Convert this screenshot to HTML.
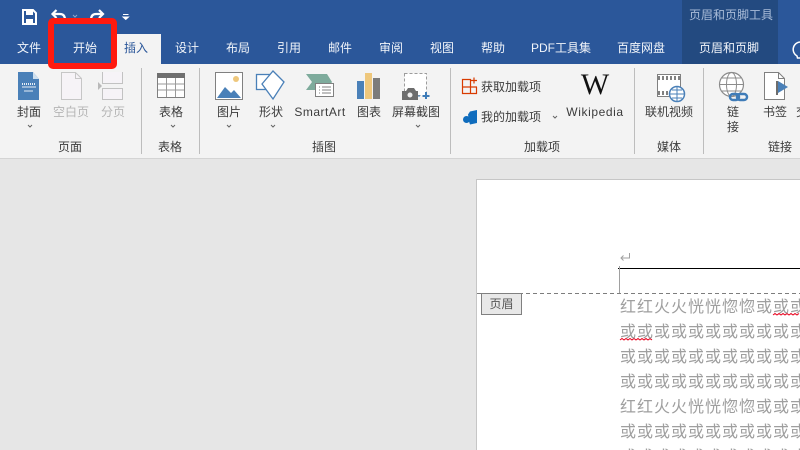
<!DOCTYPE html>
<html><head><meta charset="utf-8">
<style>
html,body{margin:0;padding:0;width:800px;height:450px;overflow:hidden;background:#e6e6e6}
body{position:relative;font-family:"Liberation Sans","Noto Sans CJK SC",sans-serif}
.t{position:absolute;white-space:nowrap;transform:translate(-50%,-50%);font-size:12px;line-height:14px;color:#3c3c3c}
.tab{color:#f2f5fa}
.g{color:#b5b5b5}
.sep{position:absolute;top:68px;height:86px;width:1px;background:#bdbdbd}
.doc{position:absolute;left:620px;top:295px;width:180px;height:155px;overflow:hidden}
.l{position:absolute;left:0;white-space:nowrap;font-size:16px;line-height:20px;letter-spacing:1px;color:#9f9f9f;font-family:"Noto Sans CJK SC",sans-serif}
svg{position:absolute;left:0;top:0}
</style></head>
<body>
<div style="position:absolute;left:0;top:0;width:800px;height:64px;background:#2b579a"></div>
<div style="position:absolute;left:682px;top:0;width:96px;height:64px;background:#234a80"></div>
<div style="position:absolute;left:116px;top:34px;width:45px;height:30px;background:#f3f3f3"></div>
<div style="position:absolute;left:0;top:64px;width:800px;height:94px;background:#f3f3f3"></div>
<div style="position:absolute;left:0;top:158px;width:800px;height:1px;background:#d4d4d4"></div>

<div class="t tab" style="left:29px;top:48px">文件</div>
<div class="t tab" style="left:85px;top:48px">开始</div>
<div class="t" style="left:136px;top:48px;color:#2b579a">插入</div>
<div class="t tab" style="left:187px;top:48px">设计</div>
<div class="t tab" style="left:238px;top:48px">布局</div>
<div class="t tab" style="left:289px;top:48px">引用</div>
<div class="t tab" style="left:340px;top:48px">邮件</div>
<div class="t tab" style="left:391px;top:48px">审阅</div>
<div class="t tab" style="left:442px;top:48px">视图</div>
<div class="t tab" style="left:493px;top:48px">帮助</div>
<div class="t tab" style="left:561px;top:48px">PDF工具集</div>
<div class="t tab" style="left:641px;top:48px">百度网盘</div>
<div class="t tab" style="left:729px;top:48px">页眉和页脚</div>
<div class="t" style="left:731px;top:15px;color:#a9bcd8">页眉和页脚工具</div>

<div class="sep" style="left:141px"></div>
<div class="sep" style="left:199px"></div>
<div class="sep" style="left:450px"></div>
<div class="sep" style="left:634px"></div>
<div class="sep" style="left:703px"></div>

<div class="t" style="left:29px;top:112px">封面</div>
<div class="t g" style="left:71px;top:112px">空白页</div>
<div class="t g" style="left:113px;top:112px">分页</div>
<div class="t" style="left:171px;top:112px">表格</div>
<div class="t" style="left:229px;top:112px">图片</div>
<div class="t" style="left:271px;top:112px">形状</div>
<div class="t" style="left:320px;top:112px;letter-spacing:.5px">SmartArt</div>
<div class="t" style="left:369px;top:112px">图表</div>
<div class="t" style="left:416px;top:112px">屏幕截图</div>
<div class="t" style="left:511px;top:87px">获取加载项</div>
<div class="t" style="left:511px;top:117px">我的加载项</div>
<div class="t" style="left:595px;top:112px;letter-spacing:.6px">Wikipedia</div>
<div class="t" style="left:669px;top:112px">联机视频</div>
<div class="t" style="left:733px;top:112px">链</div>
<div class="t" style="left:733px;top:127px">接</div>
<div class="t" style="left:775px;top:112px">书签</div>
<div style="position:absolute;left:796px;top:105px;width:4px;height:14px;overflow:hidden;font-size:12px;line-height:14px;color:#3c3c3c">交</div>

<div class="t" style="left:70px;top:147px">页面</div>
<div class="t" style="left:170px;top:147px">表格</div>
<div class="t" style="left:324px;top:147px">插图</div>
<div class="t" style="left:542px;top:147px">加载项</div>
<div class="t" style="left:669px;top:147px">媒体</div>
<div class="t" style="left:780px;top:147px">链接</div>

<div class="t" style="left:595px;top:85px;font-family:'Liberation Serif',serif;font-size:30px;line-height:30px;color:#111">W</div>

<svg width="800" height="160" viewBox="0 0 800 160">
 <!-- QAT -->
 <path d="M23 10h10l3 3v11H23z" fill="none" stroke="#fff" stroke-width="2"/>
 <rect x="26" y="11" width="7" height="4" fill="#fff"/>
 <rect x="26" y="19" width="7" height="5" fill="#fff"/>
 <path d="M56.500 10l-4 4 4 4M53 14h7c3.500 0 5 2 5 6" fill="none" stroke="#fff" stroke-width="2.200"/>
 <path d="M73 15l2 2 2-2" fill="none" stroke="#8ea6cb" stroke-width="1"/>
 <path d="M99 10l4 4-4 4M103 14h-7c-3.500 0-5 2-5 6" fill="none" stroke="#fff" stroke-width="2.200"/>
 <path d="M123 14.500h5.500M123 17h5.500l-2.750 2.500z" fill="#fff" stroke="#fff" stroke-width="1"/>
 <path d="M800 42a7.500 7.500 0 0 0-3 14l.5 2H800" fill="none" stroke="#fff" stroke-width="1.500"/>

 <!-- chevrons -->
 <g fill="none" stroke="#666" stroke-width="1">
  <path d="M28 125l2 2 2-2M171 125l2 2 2-2M227 125l2 2 2-2M271 125l2 2 2-2M416 125l2 2 2-2M553 116l2 2 2-2"/>
 </g>

 <!-- cover -->
 <path d="M18 72h15l6 7v21H18z" fill="#4a80b8"/>
 <path d="M33 72l6 7h-6z" fill="#cfe0ef"/>
 <path d="M22 84h14" stroke="#e7eef6" stroke-width="2" stroke-dasharray="1 1"/>
 <path d="M22 87h14M24 91h9" stroke="#e7eef6" stroke-width="1"/>
 <!-- blank -->
 <path d="M61.500 72.500h14l6 6v21h-20z" fill="#f6f3f7" stroke="#c6c6c6"/>
 <path d="M75.500 72.500v6h6" fill="none" stroke="#c6c6c6"/>
 <!-- page break -->
 <path d="M102.500 72v11.500h20V72" fill="#f6f3f7" stroke="#c2c2c2"/>
 <rect x="102.500" y="88.500" width="20" height="11" fill="#f6f3f7" stroke="#c2c2c2"/>
 <path d="M98 82l4 4-4 4z" fill="#b9b9b9"/>
 <!-- table -->
 <rect x="157.500" y="73.500" width="27" height="24" fill="#fff" stroke="#808080"/>
 <rect x="157" y="73" width="28" height="5" fill="#6f6f6f"/>
 <path d="M158 84h26M158 90h26M166.500 78v19M175.500 78v19" stroke="#9a9a9a"/>
 <!-- picture -->
 <rect x="215.500" y="72.500" width="27" height="27" fill="#fff" stroke="#808080"/>
 <circle cx="236" cy="79" r="3" fill="#eec77c"/>
 <path d="M217 98l8-11 6 6 3-3 7 8z" fill="#4a80b8"/>
 <!-- shapes -->
 <rect x="256.500" y="74.500" width="15" height="15" fill="#fff" stroke="#4a80b8" stroke-width="1.300"/>
 <path d="M273 71l11 11-11 17-11-15z" fill="#fff" stroke="#4a80b8" stroke-width="1.300"/>
 <!-- smartart -->
 <path d="M306 74h21l5 8-5 8h-21l6-8z" fill="#7eab9c"/>
 <rect x="315.500" y="83.500" width="18" height="13" fill="#fff" stroke="#808080"/>
 <path d="M319 87h1M319 90h1M319 93h1M322 87h9M322 90h9M322 93h9" stroke="#808080"/>
 <!-- chart -->
 <rect x="357" y="81" width="7" height="18" fill="#4a80b8"/>
 <rect x="365" y="73" width="7" height="26" fill="#eec77c"/>
 <rect x="373" y="78" width="7" height="21" fill="#7c7c7c"/>
 <!-- screenshot -->
 <rect x="404.500" y="73.500" width="22" height="22" fill="#fff" stroke="#9c9c9c" stroke-dasharray="3 2"/>
 <path d="M402 91h4l2-3h6l2 3h2v9h-16z" fill="#6d6d6d"/>
 <circle cx="410" cy="95" r="3" fill="#eee" stroke="#6d6d6d"/>
 <path d="M426 92v7M422.500 96h7" stroke="#3f7cb8" stroke-width="2"/>
 <path d="M418 96h2" stroke="#3f7cb8"/>
 <!-- get addins -->
 <path d="M462.500 79.500h8v14h-8zM462.500 87h14.500M470.500 93.500h6V87" fill="none" stroke="#d83b01" stroke-width="1.200"/>
 <path d="M474 77.500v6M471 80.500h6" stroke="#d83b01" stroke-width="1.200"/>
 <!-- my addins -->
 <path d="M470 111.500l7-1.500 0 13-7 1.500-1-3-1-7z" fill="#0f6cbd"/>
 <circle cx="466.500" cy="119.500" r="3.500" fill="#0f6cbd"/>
 <!-- video -->
 <rect x="657.500" y="74.500" width="23" height="22" fill="#fff" stroke="#808080"/>
 <path d="M658 78h22M658 93h22" stroke="#808080" stroke-width="4" stroke-dasharray="2 2"/>
 <circle cx="677" cy="94" r="7.500" fill="#fff" stroke="#4a80b8" stroke-width="1.500"/>
 <path d="M670 94h14M677 87v14M672 90h10M672 98h10" stroke="#4a80b8"/>
 <!-- link -->
 <circle cx="731.500" cy="84.500" r="12" fill="#fff" stroke="#8c8c8c" stroke-width="1.200"/>
 <ellipse cx="731.500" cy="84.500" rx="5" ry="12" fill="none" stroke="#8c8c8c"/>
 <path d="M719.500 84.500h24M722 78h19M722 91h19" stroke="#8c8c8c"/>
 <rect x="730" y="94" width="9" height="6" rx="3" fill="none" stroke="#3f7cb8" stroke-width="2.500"/>
 <rect x="737" y="94" width="10" height="6" rx="3" fill="none" stroke="#3f7cb8" stroke-width="2.500"/>
 <!-- bookmark -->
 <path d="M764.500 72.500h14l6 6v21h-20z" fill="#fff" stroke="#808080"/>
 <path d="M778.500 72.500v6h6" fill="none" stroke="#808080"/>
 <rect x="776" y="81" width="2" height="14" fill="#6d6d6d"/>
 <path d="M778 81l10 6-10 6z" fill="#4a80b8"/>
</svg>

<!-- red highlight -->
<div style="position:absolute;left:48px;top:18px;width:69px;height:51px;box-sizing:border-box;border:6px solid #ff1a0f;border-radius:5px"></div>

<!-- page -->
<div style="position:absolute;left:476px;top:179px;width:324px;height:271px;background:#fff;border:1px solid #c6c6c6;border-width:1px 0 0 1px;box-sizing:border-box"></div>
<div style="position:absolute;left:618px;top:268px;width:182px;height:1px;background:#000"></div>
<div style="position:absolute;left:619px;top:266px;width:1px;height:27px;background:#a0a0a0"></div>
<svg width="800" height="450" viewBox="0 0 800 450">
 <path d="M477 293.500h323" stroke="#7d7d7d" stroke-dasharray="4 3" fill="none"/>
 <path d="M629.500 253v5h-8.500M623.500 255.500l-2.500 2.500 2.500 2.500" fill="none" stroke="#a0a0a0"/>
 <path d="M773 315l2-1.500 2 1.500 2-1.500 2 1.500 2-1.500 2 1.500 2-1.500 2 1.500 2-1.500 2 1.500 2-1.500 2 1.500 2-1.500M620 340l2-1.500 2 1.500 2-1.500 2 1.500 2-1.500 2 1.500 2-1.500 2 1.500 2-1.500 2 1.500 2-1.500 2 1.500 2-1.500 2 1.500 2-1.500 2 1.500" fill="none" stroke="#e8001c"/>
</svg>
<div style="position:absolute;left:481px;top:293px;width:41px;height:22px;box-sizing:border-box;background:#e8e8e8;border:1px solid #808080;font-size:12px;line-height:20px;text-align:center;color:#555">页眉</div>
<div class="doc">
<div class="l" style="top:0">红红火火恍恍惚惚或或或</div>
<div class="l" style="top:25px">或或或或或或或或或或或</div>
<div class="l" style="top:50px">或或或或或或或或或或或</div>
<div class="l" style="top:75px">或或或或或或或或或或或</div>
<div class="l" style="top:100px">红红火火恍恍惚惚或或或</div>
<div class="l" style="top:125px">或或或或或或或或或或或</div>
<div class="l" style="top:150px">或或或或或或或或或或或</div>
</div>
</body></html>
